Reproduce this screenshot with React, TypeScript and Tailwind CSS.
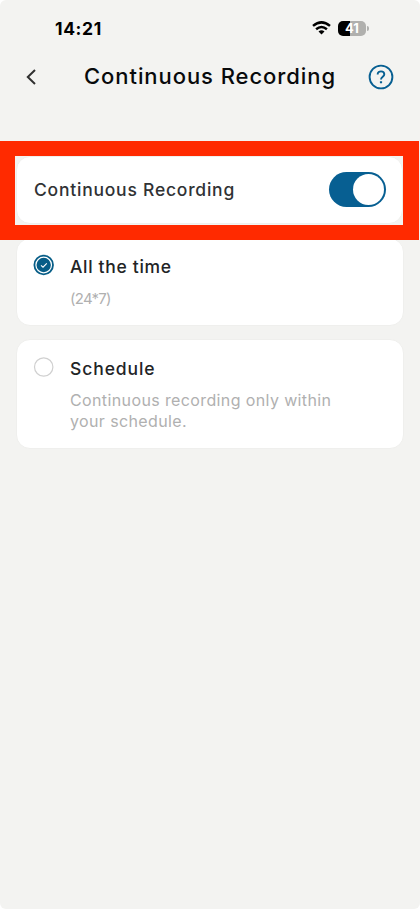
import type { ReactNode } from "react";

function StatusBar() {
  return (
    <div className="flex h-[56px] items-center justify-between pl-[55px] pr-[51px] text-black">
      <span className="text-[17.5px] font-bold leading-none tracking-[0.6px] pt-px font-['Inter',sans-serif]">14:21</span>
      <div className="flex items-center gap-[7px]">
        <svg width="19" height="14" viewBox="0 0 19 14" fill="none" stroke="currentColor" strokeWidth="2.5">
          <path d="M1 4.9 Q9.5 -2.2 18 4.9" />
          <path d="M4.1 8.2 Q9.5 3.7 14.9 8.2" />
          <path d="M6.5 10.4 Q9.5 8.2 12.5 10.4 L9.5 13.6 Z" fill="currentColor" stroke="none" />
        </svg>
        <div className="flex items-center gap-px">
          <div className="flex h-[15px] w-[28px] items-center justify-center rounded-[5px] bg-[linear-gradient(90deg,#000_42%,#b0b0ae_42%)] text-[13px] font-bold leading-none text-white">
            41
          </div>
          <div className="h-[5px] w-[2px] rounded-r-full bg-[#b0b0ae]" />
        </div>
      </div>
    </div>
  );
}

function Option({ title, text, checked, className, titleClass, textClass }: {
  title: string;
  text: ReactNode;
  checked?: boolean;
  className: string;
  titleClass: string;
  textClass: string;
}) {
  return (
    <section className={`mx-4 flex rounded-[14px] border border-[#efefed] bg-white pl-4 ${className}`}>
      <svg className="shrink-0" width="22" height="22" viewBox="0 0 22 22" fill="none">
        {checked ? (
          <>
            <circle cx="10.7" cy="11" r="9.3" stroke="#075d87" strokeWidth="1.8" />
            <circle cx="10.7" cy="11" r="7.2" fill="#075d87" />
            <path d="m8 11.4 2 1.8 3.8-3.9" stroke="white" strokeWidth="1.1" />
          </>
        ) : (
          <circle cx="10.7" cy="11" r="9.2" stroke="#d0d0d0" strokeWidth="1.2" />
        )}
      </svg>
      <div className="ml-[15px] pt-px">
        <h2 className={`text-[17.5px] font-medium leading-6 text-[#222426] ${titleClass}`}>{title}</h2>
        <p className={`mt-[9px] leading-[21px] text-[#b0b0b0] ${textClass}`}>{text}</p>
      </div>
    </section>
  );
}

export default function App() {
  return (
    <div className="h-[909px] w-[420px] bg-white font-['Inter',sans-serif]">
      <main className="h-full overflow-hidden rounded-[6px] bg-[#f3f3f1]">
        <StatusBar />
        <header className="flex h-[41px] items-center justify-between pl-[26px] pr-[26px]">
          <svg width="10" height="16" viewBox="0 0 10 16" fill="none" stroke="#303030" strokeWidth="2">
            <path d="M9 1 1.8 8 9 15" />
          </svg>
          <h1 className="ml-[16px] whitespace-nowrap pb-[2px] text-[22px] font-medium leading-none tracking-[0.93px] text-[#080a0c]">Continuous Recording</h1>
          <svg width="26" height="26" viewBox="0 0 26 26" fill="none" stroke="#075f92" strokeWidth="1.9">
            <circle cx="13" cy="13" r="11.4" />
            <path d="M9.7 10.6V10C9.7 6.5 16.3 6.4 16.3 10.2C16.3 12.8 13 12.7 13 15.6" />
            <path d="M13 17.2V19.3" strokeWidth="2.2" />
          </svg>
        </header>
        <section className="relative z-10 mt-[44px] h-[99px] w-[419px] border-[15px] border-r-[16px] border-[#ff2a00] bg-[#f3f3f1]">
          <div className="ml-px flex h-[68px] items-center justify-between rounded-[14px] border border-[#efefed] bg-white pb-[2px] pl-[17px] pr-[16px]">
            <span className="pt-[2px] text-[17.5px] font-medium leading-6 tracking-[0.77px] text-[#303234]">Continuous Recording</span>
            <div className="flex h-[35px] w-[57px] items-center justify-end rounded-full bg-[#075f92] pr-[2px]">
              <div className="size-[31px] rounded-full bg-white" />
            </div>
          </div>
        </section>
        <Option
          title="All the time"
          text="(24*7)"
          checked
          className="-mt-[2px] h-[88px] pt-[15px]"
          titleClass="tracking-[0.68px]"
          textClass="text-[15px] tracking-[-0.75px]"
        />
        <Option
          title="Schedule"
          text={<>Continuous recording only within<br />your schedule.</>}
          className="mt-[13px] h-[110px] pt-[16px]"
          titleClass="tracking-[0.9px]"
          textClass="text-[16px] tracking-[0.38px]"
        />
      </main>
    </div>
  );
}
